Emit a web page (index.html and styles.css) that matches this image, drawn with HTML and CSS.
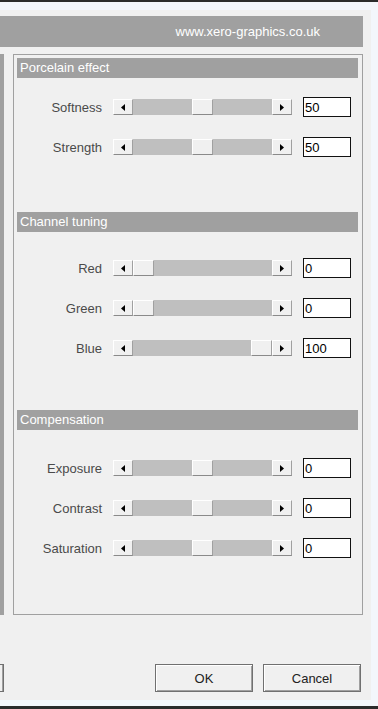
FILE: index.html
```html
<!DOCTYPE html>
<html lang="en">
<head>
  <meta charset="UTF-8">
  <meta name="viewport" content="width=device-width, initial-scale=1.0">
  <title>Porcelain effect</title>
  <link rel="stylesheet" href="styles.css">
</head>
<body>
  <div class="dialog">
    <div class="banner">www.xero-graphics.co.uk</div>

    <div class="main">
      <div class="side"></div>
      <div class="group">

        <!-- Porcelain effect -->
        <div class="section">
          <div class="section-title">Porcelain effect</div>
          <div class="rows rows-first">
            <div class="row">
              <span class="label">Softness</span>
              <div class="slider">
                <span class="arrow"><svg width="4" height="7" viewBox="0 0 4 7"><polygon points="4,0 0,3.5 4,7" fill="#000"/></svg></span>
                <span class="track"><span class="thumb" style="--v: 50"></span></span>
                <span class="arrow"><svg width="4" height="7" viewBox="0 0 4 7"><polygon points="0,0 4,3.5 0,7" fill="#000"/></svg></span>
              </div>
              <input class="value" type="text" value="50">
            </div>
            <div class="row">
              <span class="label">Strength</span>
              <div class="slider">
                <span class="arrow"><svg width="4" height="7" viewBox="0 0 4 7"><polygon points="4,0 0,3.5 4,7" fill="#000"/></svg></span>
                <span class="track"><span class="thumb" style="--v: 50"></span></span>
                <span class="arrow"><svg width="4" height="7" viewBox="0 0 4 7"><polygon points="0,0 4,3.5 0,7" fill="#000"/></svg></span>
              </div>
              <input class="value" type="text" value="50">
            </div>
          </div>
        </div>

        <!-- Channel tuning -->
        <div class="section section-channel">
          <div class="section-title">Channel tuning</div>
          <div class="rows rows-channel">
            <div class="row">
              <span class="label">Red</span>
              <div class="slider">
                <span class="arrow"><svg width="4" height="7" viewBox="0 0 4 7"><polygon points="4,0 0,3.5 4,7" fill="#000"/></svg></span>
                <span class="track"><span class="thumb" style="--v: 0"></span></span>
                <span class="arrow"><svg width="4" height="7" viewBox="0 0 4 7"><polygon points="0,0 4,3.5 0,7" fill="#000"/></svg></span>
              </div>
              <input class="value" type="text" value="0">
            </div>
            <div class="row">
              <span class="label">Green</span>
              <div class="slider">
                <span class="arrow"><svg width="4" height="7" viewBox="0 0 4 7"><polygon points="4,0 0,3.5 4,7" fill="#000"/></svg></span>
                <span class="track"><span class="thumb" style="--v: 0"></span></span>
                <span class="arrow"><svg width="4" height="7" viewBox="0 0 4 7"><polygon points="0,0 4,3.5 0,7" fill="#000"/></svg></span>
              </div>
              <input class="value" type="text" value="0">
            </div>
            <div class="row">
              <span class="label">Blue</span>
              <div class="slider">
                <span class="arrow"><svg width="4" height="7" viewBox="0 0 4 7"><polygon points="4,0 0,3.5 4,7" fill="#000"/></svg></span>
                <span class="track"><span class="thumb" style="--v: 100"></span></span>
                <span class="arrow"><svg width="4" height="7" viewBox="0 0 4 7"><polygon points="0,0 4,3.5 0,7" fill="#000"/></svg></span>
              </div>
              <input class="value" type="text" value="100">
            </div>
          </div>
        </div>

        <!-- Compensation -->
        <div class="section section-comp">
          <div class="section-title">Compensation</div>
          <div class="rows rows-comp">
            <div class="row">
              <span class="label">Exposure</span>
              <div class="slider">
                <span class="arrow"><svg width="4" height="7" viewBox="0 0 4 7"><polygon points="4,0 0,3.5 4,7" fill="#000"/></svg></span>
                <span class="track"><span class="thumb" style="--v: 50"></span></span>
                <span class="arrow"><svg width="4" height="7" viewBox="0 0 4 7"><polygon points="0,0 4,3.5 0,7" fill="#000"/></svg></span>
              </div>
              <input class="value" type="text" value="0">
            </div>
            <div class="row">
              <span class="label">Contrast</span>
              <div class="slider">
                <span class="arrow"><svg width="4" height="7" viewBox="0 0 4 7"><polygon points="4,0 0,3.5 4,7" fill="#000"/></svg></span>
                <span class="track"><span class="thumb" style="--v: 50"></span></span>
                <span class="arrow"><svg width="4" height="7" viewBox="0 0 4 7"><polygon points="0,0 4,3.5 0,7" fill="#000"/></svg></span>
              </div>
              <input class="value" type="text" value="0">
            </div>
            <div class="row">
              <span class="label">Saturation</span>
              <div class="slider">
                <span class="arrow"><svg width="4" height="7" viewBox="0 0 4 7"><polygon points="4,0 0,3.5 4,7" fill="#000"/></svg></span>
                <span class="track"><span class="thumb" style="--v: 50"></span></span>
                <span class="arrow"><svg width="4" height="7" viewBox="0 0 4 7"><polygon points="0,0 4,3.5 0,7" fill="#000"/></svg></span>
              </div>
              <input class="value" type="text" value="0">
            </div>
          </div>
        </div>

      </div>
    </div>

    <div class="footer">
      <span class="btn-stub"></span>
      <button class="btn btn-ok">OK</button>
      <button class="btn">Cancel</button>
    </div>
  </div>
</body>
</html>
```

FILE: styles.css
```css
* {
  box-sizing: border-box;
}
body {
  margin: 0;
  background-color: #f3f6fb;
  border-top: 2px solid #2b2b2b;
  border-bottom: 3px solid #2b2b2b;
  font-family: "Liberation Sans", Arial, sans-serif;
  font-size: 13px;
}
.dialog {
  margin-top: 8px;
  margin-bottom: 6px;
  width: 371px;
  height: 690px;
  background-color: #f0f0f0;
  overflow: hidden;
}
.banner {
  margin-top: 6px;
  width: 363px;
  height: 31px;
  line-height: 31px;
  padding-right: 43px;
  background-color: #a0a0a0;
  color: #fff;
  text-align: right;
}
.main {
  margin-top: 7px;
  height: 561px;
  display: flex;
}
.side {
  width: 4px;
  background-color: #a0a0a0;
}
.group {
  margin-left: 9px;
  width: 350px;
  border: 1px solid #a0a0a0;
  padding: 3px 4px 0 3px;
}
.section-title {
  height: 20px;
  line-height: 20px;
  padding-left: 3px;
  background-color: #a0a0a0;
  color: #fff;
}
.section-channel {
  margin-top: 55px;
}
.section-comp {
  margin-top: 52px;
}
.rows {
  display: flex;
  flex-direction: column;
  gap: 20px;
}
.rows-first {
  padding-top: 19px;
}
.rows-channel {
  padding-top: 26px;
}
.rows-comp {
  padding-top: 28px;
}
.row {
  height: 20px;
  display: flex;
  align-items: center;
}
.label {
  width: 85px;
  text-align: right;
  color: #4a4a4a;
}
.slider {
  margin-left: 11px;
  height: 16px;
  display: flex;
}
.arrow {
  width: 20px;
  height: 16px;
  display: flex;
  align-items: center;
  justify-content: center;
  background-color: #f0f0f0;
  border-top: 1px solid #fff;
  border-left: 1px solid #fff;
  border-right: 1px solid #a0a0a0;
  border-bottom: 1px solid #8a8a8a;
}
.track {
  width: 139px;
  height: 16px;
  background-color: #bfbfbf;
  display: flex;
}
.thumb {
  margin-left: calc(var(--v) * 1.18px);
  width: 21px;
  height: 16px;
  background-color: #f0f0f0;
  border-top: 1px solid #fff;
  border-left: 1px solid #fff;
  border-right: 1px solid #a0a0a0;
  border-bottom: 1px solid #8a8a8a;
}
.value {
  margin-left: 11px;
  width: 48px;
  height: 20px;
  padding: 0 0 0 1px;
  border: 1px solid #111;
  background-color: #fff;
  font-family: "Liberation Sans", Arial, sans-serif;
  font-size: 13px;
  color: #000;
}
.footer {
  margin-top: 49px;
  display: flex;
  gap: 10px;
}
.btn-stub {
  width: 4px;
  height: 28px;
  border: 1px solid #707070;
  border-left: none;
  box-shadow: inset -1px 0 #a0a0a0;
}
.btn {
  width: 98px;
  height: 28px;
  padding: 0;
  border: 1px solid #707070;
  box-shadow: inset 1px 1px #fff, inset -1px -1px #a0a0a0;
  background-color: #f0f0f0;
  font-family: "Liberation Sans", Arial, sans-serif;
  font-size: 13px;
  color: #222;
}
.btn-ok {
  margin-left: 141px;
}
```
